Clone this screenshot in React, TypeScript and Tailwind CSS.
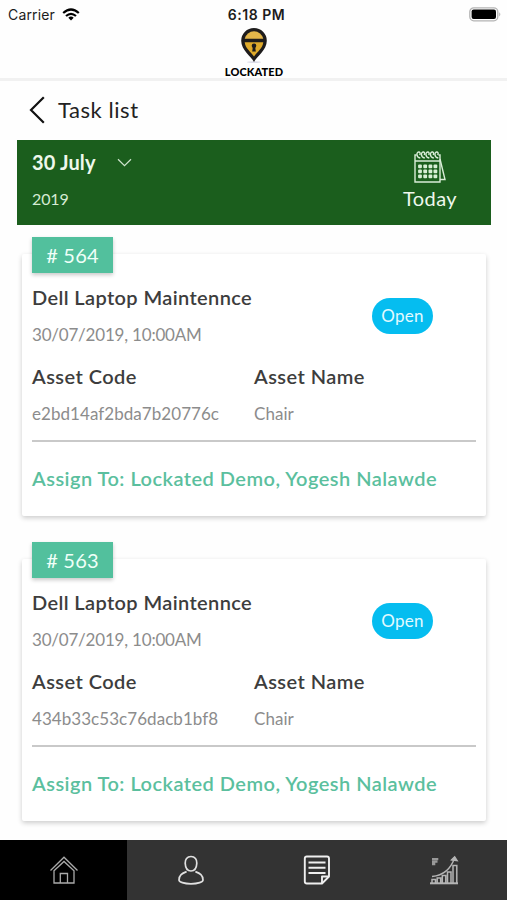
import { useState } from 'react'

const TASKS = [
  {
    id: 564,
    title: 'Dell Laptop Maintennce',
    date: '30/07/2019, 10:00AM',
    status: 'Open',
    code: 'e2bd14af2bda7b20776c',
    asset: 'Chair',
    assignee: 'Lockated Demo, Yogesh Nalawde',
  },
  {
    id: 563,
    title: 'Dell Laptop Maintennce',
    date: '30/07/2019, 10:00AM',
    status: 'Open',
    code: '434b33c53c76dacb1bf8',
    asset: 'Chair',
    assignee: 'Lockated Demo, Yogesh Nalawde',
  },
]

type Task = (typeof TASKS)[number]

function StatusBar() {
  return (
    <div className="grid h-7 grid-cols-3 items-center font-['Inter','Liberation_Sans',sans-serif] text-[#1c1c1c]">
      <div className="flex items-center gap-[7px] pl-[8px]">
        <span className="text-[14px] tracking-[0.15px]">Carrier</span>
        <svg width="18" height="13" viewBox="0 0 18 13" fill="none" stroke="#000" strokeWidth="2.2">
          <path d="M1.2 5 Q9 -2 16.8 5" />
          <path d="M4 8 Q9 3.6 14 8" />
          <path d="M6.3 9.7 Q9 7.4 11.7 9.7 L9 12.4Z" fill="#000" stroke="none" />
        </svg>
      </div>
      <span className="pl-[6px] text-center text-[14px] font-semibold tracking-[0.5px]">6:18 PM</span>
      <div className="flex justify-end pr-[5px]">
        <svg width="33" height="15" viewBox="0 0 33 15">
          <rect x="0.8" y="0.8" width="28" height="13" rx="4" fill="#fff" stroke="#b4b4b4" strokeWidth="1.3" />
          <rect x="2.6" y="2.6" width="24.4" height="9.4" rx="2" fill="#000" />
          <path d="M30.3 5.2 Q32.3 7.3 30.3 9.4Z" fill="#aaa" />
        </svg>
      </div>
    </div>
  )
}

function Logo() {
  return (
    <div className="flex h-[53px] flex-col items-center border-b-[3px] border-[#f1f1f1] pl-px">
      <svg width="30" height="36" viewBox="0 0 30 36">
        <ellipse cx="15" cy="34.2" rx="7" ry="0.9" fill="#dcdce8" />
        <path d="M15 34 C12 28 2.2 22 2.2 12.7 A12.8 12.6 0 0 1 27.8 12.7 C27.8 22 18 28 15 34Z" fill="#1e1c1c" />
        <path d="M5.7 10.8 A9.5 9.4 0 0 1 24.3 10.8Z" fill="#e3b64a" />
        <path d="M5.7 14.2 H24.3 C23.6 20.4 18.5 23.4 15 28.6 C11.5 23.4 6.4 20.4 5.7 14.2Z" fill="#dfaa2b" />
        <circle cx="15" cy="17.8" r="2.3" fill="#1e1c1c" />
        <path d="M14 18 H16 L16.8 23.6 H13.2Z" fill="#1e1c1c" />
      </svg>
      <span className="mt-[2px] font-['Lato',sans-serif] text-[11px] leading-[12px] font-black tracking-[0.1px] text-black">
        LOCKATED
      </span>
    </div>
  )
}

function CalendarIcon() {
  return (
    <svg width="32" height="33" viewBox="0 0 32 33" fill="none" stroke="#d9edd7" strokeWidth="1.4">
      <path d="M2.5 4 H1 V31 H26 V4 H24.5 M1 10 H26" />
      <path d="M26 8 L31 28.5 H26" />
      {[4.5, 9, 13.5, 18, 22.5].map(x => (
        <path key={x} d={`M${x + 1.8} 7 C${x - 3} 6 ${x - 2} 0.5 ${x + 0.6} 1 C${x + 2} 1.5 ${x + 1.8} 3 ${x + 1.2} 4`} />
      ))}
      {[15.3, 20.3, 25.3].map(y =>
        [6, 11.2, 16.4, 21.4].map(x => (
          <rect key={`${x}-${y}`} x={x - 1.9} y={y - 1.8} width="3.8" height="3.8" rx="1" fill="#d7eed5" stroke="none" />
        ))
      )}
    </svg>
  )
}

function DateBanner() {
  return (
    <div className="mx-4 ml-[17px] flex h-[85px] justify-between bg-[#1b5e1d] text-[#eef8ec]">
      <div className="pl-[15px] pt-[8px]">
        <div className="flex items-center gap-[21px]">
          <span className="w-[64px] whitespace-nowrap text-[20px] leading-7 font-bold tracking-[0.15px]">30 July</span>
          <svg width="15" height="9" viewBox="0 0 15 9" fill="none" stroke="#cfe5ce" strokeWidth="1.2">
            <path d="M1 1.2 L7.5 7.6 L14 1.2" />
          </svg>
        </div>
        <p className="mt-[11px] text-[16px] leading-6 tracking-[-0.1px] text-[#d5ebd3]">2019</p>
      </div>
      <div className="flex flex-col items-center pr-[34px] pt-[11px]">
        <CalendarIcon />
        <span className="text-[20px] leading-7 tracking-[0.4px]">Today</span>
      </div>
    </div>
  )
}

function Field({ label, value }: { label: string; value: string }) {
  return (
    <div>
      <p className="text-[20px] leading-7 font-semibold tracking-[0.45px] text-[#3d3d3d]">{label}</p>
      <p className="mt-[12px] text-[17px] leading-6 tracking-[0.05px] text-[#8c8c8c]">{value}</p>
    </div>
  )
}

function TaskCard({ task }: { task: Task }) {
  return (
    <div className="relative mx-[21px] ml-[22px] pt-[17px]">
      <div className="h-[262px] rounded-[2px] bg-white px-[10px] pt-[29px] shadow-[0_2px_5px_rgba(0,0,0,0.2)]">
        <div className="flex justify-between">
          <div>
            <h2 className="text-[20px] leading-7 font-semibold tracking-[0.38px] text-[#3d3d3d]">{task.title}</h2>
            <p className="mt-[12px] text-[17px] leading-6 tracking-[-0.2px] text-[#8c8c8c]">{task.date}</p>
          </div>
          <span className="mt-[15px] mr-[43px] flex h-[36px] w-[61px] items-center justify-center rounded-full bg-[#05bdf0] text-[17px] tracking-[0.3px] text-[#e2faff]">
            {task.status}
          </span>
        </div>
        <div className="mt-[15px] grid grid-cols-2">
          <Field label="Asset Code" value={task.code} />
          <Field label="Asset Name" value={task.asset} />
        </div>
        <p className="mt-[14px] border-t-2 border-[#c9c9c9] pt-[22px] text-[20px] leading-7 font-semibold tracking-[0.47px] whitespace-nowrap text-[#5bbf9e]">
          Assign To: {task.assignee}
        </p>
      </div>
      <span className="absolute top-0 left-[10px] flex h-[36px] w-[81px] items-center justify-center bg-[#52c09d] text-[20px] tracking-[0.2px] text-[#effff8] shadow-[0_2px_4px_rgba(0,0,0,0.22)]">
        # {task.id}
      </span>
    </div>
  )
}

const HomeIcon = () => (
  <svg width="30" height="30" viewBox="0 0 30 30" fill="none" stroke="#aaa" strokeWidth="1.3">
    <path d="M1.5 15.5 L15 2.2 L28.5 15.5" />
    <path d="M5 15.8 L15 6.5 L25 15.8 V28 H5Z" />
    <path d="M11.3 28 V18.5 H18.5 V28" />
  </svg>
)

const UserIcon = () => (
  <svg width="28" height="30" viewBox="0 0 28 30" fill="none" stroke="#e0e0e0" strokeWidth="1.7">
    <path d="M14 1.5 C10 1.5 8 4.5 8.2 8.3 C8.4 13 10.5 16 14 16 C17.5 16 19.6 13 19.8 8.3 C20 4.5 18 1.5 14 1.5Z" />
    <path d="M9.6 16.6 C5 18.3 2 20 2 25 C2 27 7 28.8 14 28.8 C21 28.8 26 27 26 25 C26 20 23 18.3 18.4 16.6" />
  </svg>
)

const NoteIcon = () => (
  <svg width="28" height="30" viewBox="0 0 28 30" fill="none" stroke="#efefef" strokeWidth="1.9" strokeLinejoin="round">
    <path d="M3.8 1.5 H24 Q26 1.5 26 3.5 V21.5 L19 28.5 H3.8 Q1.8 28.5 1.8 26.5 V3.5 Q1.8 1.5 3.8 1.5Z" />
    <path d="M19 28 V21.5 H25.7 M5.5 7.5 H22.5 M5.5 12.7 H22.5 M5.5 18 H22.5" />
  </svg>
)

const ChartIcon = () => (
  <svg width="30" height="30" viewBox="0 0 30 30" fill="none" stroke="#b5b5b5" strokeWidth="1.1">
    <path d="M1 28.3 H29" strokeWidth="2" />
    <path d="M3 28 V24.5 H6.5 V28 M8.2 28 V23 H11.7 V28 M13.3 28 V20.5 H16.8 V28 M18.5 28 V17 H22 V28 M24 28 V10.5 H27.8 V28" strokeWidth="1.5" />
    <path d="M3 21.5 C13 20.5 21.5 15 25.5 3" strokeWidth="1.4" />
    <path d="M22.3 5 L25.7 1.6 L28.4 5.8Z" fill="#b5b5b5" />
    <path d="M3 4.2 H9.3 M3 6.6 H8.5 M3 9 H6.3" stroke="#999" strokeWidth="2.3" />
  </svg>
)

const TABS = [
  { name: 'home', Icon: HomeIcon },
  { name: 'profile', Icon: UserIcon },
  { name: 'notes', Icon: NoteIcon },
  { name: 'reports', Icon: ChartIcon },
]

export default function App() {
  const [active, setActive] = useState('home')

  return (
    <div className="flex h-[900px] w-[507px] flex-col overflow-hidden bg-[#fefefe] font-['Lato','Liberation_Sans',sans-serif]">
      <StatusBar />
      <Logo />

      <div className="flex h-[59px] items-center gap-[13px] pl-[29px] pb-[2px]">
        <svg width="16" height="28" viewBox="0 0 16 28" fill="none" stroke="#111" strokeWidth="2.2">
          <path d="M14.8 1.2 L2 14 L14.8 26.8" />
        </svg>
        <h1 className="text-[22px] tracking-[0.55px] text-[#222]">Task list</h1>
      </div>

      <DateBanner />

      <div className="mt-3 flex flex-1 flex-col gap-[26px]">
        {TASKS.map(t => (
          <TaskCard key={t.id} task={t} />
        ))}
      </div>

      <nav className="grid h-[60px] shrink-0 grid-cols-4">
        {TABS.map(({ name, Icon }) => (
          <button
            key={name}
            onClick={() => setActive(name)}
            className={`flex items-center justify-center pl-px ${active === name ? 'bg-black' : 'bg-[#333]'}`}
          >
            <Icon />
          </button>
        ))}
      </nav>
    </div>
  )
}
